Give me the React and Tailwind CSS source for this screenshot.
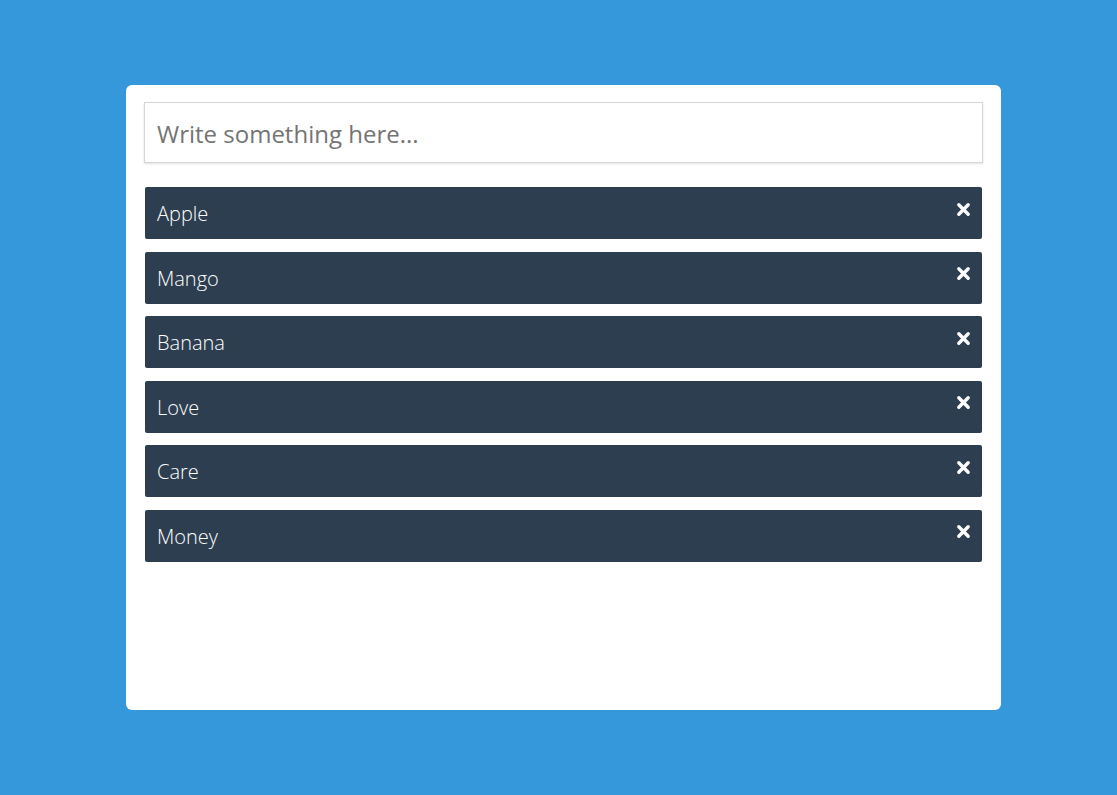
import React, { useState } from "react";

function TimesIcon() {
  return (
    <svg width="15" height="15" viewBox="0 0 16 16" className="block">
      <path d="M3 3 L13 13 M13 3 L3 13" stroke="white" strokeWidth="3.6" strokeLinecap="round" />
    </svg>
  );
}

export default function App() {
  const [items, setItems] = useState(["Apple", "Mango", "Banana", "Love", "Care", "Money"]);
  const [text, setText] = useState("");

  const addItem = (e) => {
    if (e.key === "Enter" && text.trim()) {
      setItems([...items, text.trim()]);
      setText("");
    }
  };

  const removeItem = (index) => setItems(items.filter((_, i) => i !== index));

  return (
    <div className="min-h-[795px] bg-[#3498db] pt-[85px]" style={{ fontFamily: '"Open Sans", sans-serif' }}>
      <div className="ml-[126px] w-[875px] h-[625px] bg-white rounded-[6px] px-[18px] pt-[17px]">
        {/* Input */}
        <input
          autoFocus
          value={text}
          onChange={(e) => setText(e.target.value)}
          onKeyDown={addItem}
          placeholder="Write something here..."
          className="block w-full h-[61px] border border-[#d6d6d6] px-[12px] pt-[2px] text-[24px] text-[#333] caret-black placeholder:text-[#747474] outline-none shadow-[0_1px_2px_rgba(0,0,0,0.12)]"
        />

        {/* List */}
        <ul className="mt-[24px] mx-[1px] flex flex-col gap-[12.6px]">
          {items.map((item, index) => (
            <li
              key={index}
              className="h-[52px] bg-[#2c3e50] rounded-[2px] text-white flex items-center justify-between pl-[12px] pr-[11px]"
            >
              <span className="text-[20px] font-light pt-[2px]">{item}</span>
              <button className="mb-[8px]" onClick={() => removeItem(index)}>
                <TimesIcon />
              </button>
            </li>
          ))}
        </ul>
      </div>
    </div>
  );
}
